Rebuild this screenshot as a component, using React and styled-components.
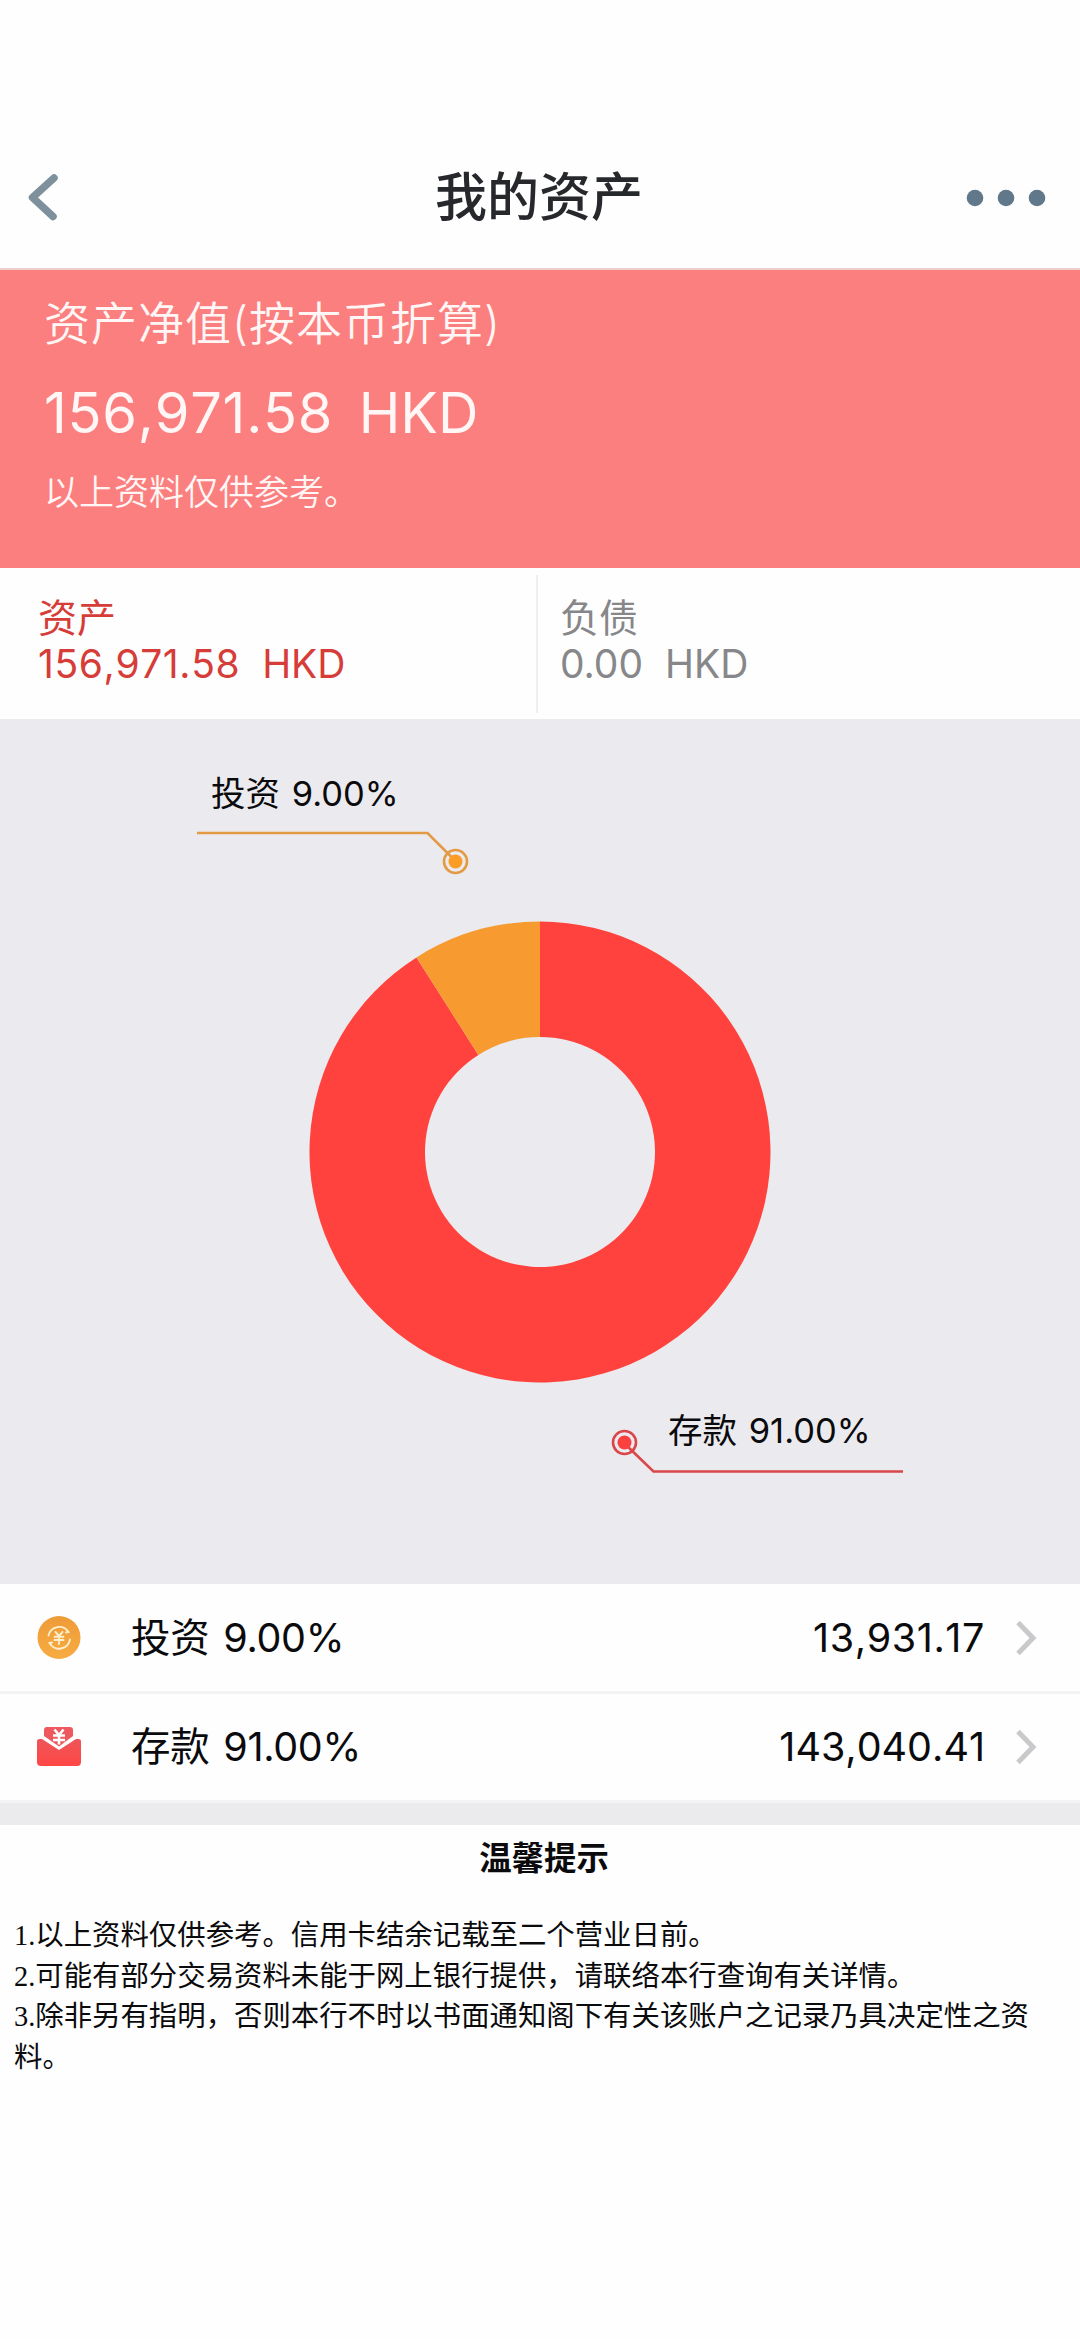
import styled, { createGlobalStyle } from "styled-components";

const GlobalStyle = createGlobalStyle`
  * {
    box-sizing: border-box;
  }
  body {
    margin: 0;
    background: #fefefe;
    color: #0b0b0d;
    font-family: Inter, "Noto Sans CJK SC", sans-serif;
  }
`;

const ORANGE = "#f79b31";
const RED = "#ff423d";

const Container = styled.div`
  display: flex;
  flex-direction: column;
  width: 1080px;
  min-height: 2339px;
`;

const Header = styled.header`
  display: grid;
  grid-template-columns: 88px 1fr 88px;
  align-items: center;
  height: 270px;
  padding: 126px 29px 0 23px;
  border-bottom: 2px solid #eccfcd;
`;

const Title = styled.h1`
  margin: 0;
  padding: 2px 0 0 4px;
  font-size: 52px;
  line-height: 60px;
  font-weight: 500;
  text-align: center;
  color: #26282c;
`;

const Amount = styled.span`
  font-kerning: none;
  letter-spacing: ${(props) => props.$spacing || "0"};
`;

const Summary = styled.section`
  display: flex;
  flex-direction: column;
  height: 298px;
  padding: 23px 44px 0;
  background: #fb7f7e;
  color: #fff6f5;
`;

const SummaryLabel = styled.span`
  font-size: 46px;
  line-height: 60px;
  font-weight: 350;
  letter-spacing: 1px;
`;

const SummaryAmount = styled.span`
  margin-top: 24px;
  font-size: 56px;
  line-height: 72px;
  font-weight: 400;
  white-space: pre;
  word-spacing: -3px;
`;

const SummaryNote = styled.span`
  margin-top: 19px;
  font-size: 35px;
  line-height: 48px;
  font-weight: 350;
`;

const Totals = styled.section`
  display: grid;
  grid-template-columns: 536px 1fr;
  height: 151px;
  padding: 7px 0 6px;
`;

const Total = styled.div`
  display: flex;
  flex-direction: column;
  padding: 20px 0 0 ${(props) => props.$left};
  border-left: ${(props) => (props.$divided ? "2px solid #f3edf1" : "none")};
  color: ${(props) => props.$color};
  font-size: 39px;
  line-height: 46px;
  white-space: pre;
`;

const ChartPanel = styled.section`
  height: 865px;
  background: #ebeaee;
`;

const ChartSvg = styled.svg`
  display: block;
`;

const ChartText = styled.text`
  font-size: 34.5px;
  word-spacing: 2px;
  fill: #0b0b0d;
`;

const List = styled.ul`
  margin: 0;
  padding: 0;
  list-style: none;
  border-bottom: 3px solid #f3f2f5;
`;

const Row = styled.li`
  display: flex;
  align-items: center;
  height: ${(props) => props.$height};
  padding: 0 41px 0 36px;
  font-size: 39.5px;
  line-height: 50px;

  & + & {
    border-top: 3px solid #f3f2f4;
  }
`;

const RowName = styled.span`
  margin-left: 49px;
  word-spacing: 3px;
  letter-spacing: -0.3px;
`;

const RowValue = styled(Amount)`
  margin-left: auto;
  margin-right: 30px;
`;

const Divider = styled.div`
  height: 22px;
  background: #ebeaed;
`;

const Tips = styled.section`
  padding: 10px 14px 0;
`;

const TipsTitle = styled.h2`
  margin: 0 0 33px;
  padding-left: 8px;
  font-size: 32.4px;
  line-height: 48px;
  font-weight: 700;
  text-align: center;
`;

const Tip = styled.p`
  margin: 0;
  font-family: "Liberation Serif", "Noto Sans CJK SC", serif;
  font-size: 28.4px;
  line-height: 40.6px;
`;

const rows = [
  {
    name: "投资 9.00%",
    value: "13,931.17",
    icon: "coin",
    height: "107px",
    spacing: "0.6px",
  },
  {
    name: "存款 91.00%",
    value: "143,040.41",
    icon: "envelope",
    height: "109px",
    spacing: "0",
  },
];

const tips = [
  "1.以上资料仅供参考。信用卡结余记载至二个营业日前。",
  "2.可能有部分交易资料未能于网上银行提供，请联络本行查询有关详情。",
  "3.除非另有指明，否则本行不时以书面通知阁下有关该账户之记录乃具决定性之资料。",
];

const BackIcon = () => (
  <svg width="40" height="48" viewBox="0 0 40 48" fill="none">
    <path
      d="M31 5 L9.5 24.5 L30 43.5"
      stroke="#7d909c"
      strokeWidth="7.5"
      strokeLinecap="round"
      strokeLinejoin="round"
    />
  </svg>
);

const MoreIcon = () => (
  <svg width="88" height="24" viewBox="0 0 88 24" fill="#61788a">
    <circle cx="12" cy="13" r="8.3" />
    <circle cx="43" cy="13" r="8.3" />
    <circle cx="74" cy="13" r="8.3" />
  </svg>
);

const CoinIcon = () => (
  <svg width="46" height="46" viewBox="0 0 46 46" fill="none">
    <defs>
      <linearGradient id="coin" x1="0" y1="0" x2="0" y2="1">
        <stop offset="0" stopColor="#ee9b38" />
        <stop offset="1" stopColor="#f7ac42" />
      </linearGradient>
    </defs>
    <circle cx="23" cy="22.5" r="21.5" fill="url(#coin)" />
    <g stroke="#ffeecb" strokeWidth="1.9" strokeLinecap="round">
      <path d="M12.5 20.5 A11 11 0 0 1 32.5 17 L30 17.5" />
      <path d="M34 24.5 A11 11 0 0 1 13.5 28 L16 27.5" />
      <path d="M19.5 17 L23 21 L26.5 17 M23 21 V29 M18.5 21.8 H27.5 M18.5 25 H27.5" />
    </g>
  </svg>
);

const EnvelopeIcon = () => (
  <svg width="46" height="46" viewBox="0 0 46 46" fill="none">
    <defs>
      <linearGradient id="envelope" x1="0" y1="0" x2="0" y2="1">
        <stop offset="0" stopColor="#ee555a" />
        <stop offset="1" stopColor="#ff4745" />
      </linearGradient>
    </defs>
    <path
      d="M8 12 V6 Q8 3 11 3 H34 Q37 3 37 6 V12 L23 22.5 Z"
      fill="#ee5960"
    />
    <path
      d="M1 17.5 Q1 15 3.500 15 H6 L23 26 L40 15 H42.500 Q45 15 45 17.500 V38 Q45 42 41 42 H5 Q1 42 1 38 Z"
      fill="url(#envelope)"
    />
    <path
      d="M18.500 5.500 L23 11 L27.500 5.500 M23 11 V20.500 M17 11.500 H29 M17 16 H29"
      stroke="#fff"
      strokeWidth="2.600"
    />
  </svg>
);

const Chevron = () => (
  <svg width="24" height="38" viewBox="0 0 24 38" fill="none">
    <path d="M3 3.5 L18 19 L3 34.5" stroke="#c9c9cc" strokeWidth="5" />
  </svg>
);

const icons = { coin: CoinIcon, envelope: EnvelopeIcon };

// point on a circle round the chart centre, angle clockwise from 12 o'clock
const point = (radius, share) => {
  const angle = share * 2 * Math.PI;
  return `${540 + radius * Math.sin(angle)} ${433 - radius * Math.cos(angle)}`;
};

const slice = (from, to) => {
  const large = to - from > 0.5 ? 1 : 0;
  return `M${point(230.5, from)} A230.5 230.5 0 ${large} 1 ${point(230.5, to)}
    L${point(115, to)} A115 115 0 ${large} 0 ${point(115, from)} Z`;
};

const Chart = () => (
  <ChartSvg width="1080" height="865" viewBox="0 0 1080 865" fill="none">
    <path d={slice(0, 0.91)} fill={RED} />
    <path d={slice(0.91, 1)} fill={ORANGE} />

    <g stroke="#e39a45" strokeWidth="2.6">
      <path d="M197 114 H427.5 L452 138.5" />
      <circle cx="455.5" cy="142.5" r="11.5" />
      <circle cx="455.5" cy="142.5" r="7" fill="#f99d26" stroke="none" />
    </g>
    <ChartText x="211" y="86.5">
      投资 9.00%
    </ChartText>

    <g stroke="#d9474b" strokeWidth="2.6">
      <path d="M626 726 L653.5 752.5 H903" />
      <circle cx="624.5" cy="723.5" r="11.5" />
      <circle cx="624.5" cy="723.5" r="7" fill="#fb4040" stroke="none" />
    </g>
    <ChartText x="668" y="723.5">
      存款 91.00%
    </ChartText>
  </ChartSvg>
);

const App = () => {
  return (
    <Container>
      <GlobalStyle />
      <Header>
        <BackIcon />
        <Title>我的资产</Title>
        <MoreIcon />
      </Header>
      <Summary>
        <SummaryLabel>资产净值(按本币折算)</SummaryLabel>
        <SummaryAmount>
          <Amount $spacing="0.75px">156,971.58</Amount>
          {"  "}HKD
        </SummaryAmount>
        <SummaryNote>以上资料仅供参考。</SummaryNote>
      </Summary>
      <Totals>
        <Total $left="38px" $color="#d63c38">
          <span>资产</span>
          <span>
            <Amount $spacing="0.6px">156,971.58</Amount>
            {"  "}HKD
          </span>
        </Total>
        <Total $left="22px" $color="#87878a" $divided>
          <span>负债</span>
          <span>0.00{"  "}HKD</span>
        </Total>
      </Totals>
      <ChartPanel>
        <Chart />
      </ChartPanel>
      <List>
        {rows.map((row) => {
          const Icon = icons[row.icon];
          return (
            <Row key={row.name} $height={row.height}>
              <Icon />
              <RowName>{row.name}</RowName>
              <RowValue $spacing={row.spacing}>{row.value}</RowValue>
              <Chevron />
            </Row>
          );
        })}
      </List>
      <Divider />
      <Tips>
        <TipsTitle>温馨提示</TipsTitle>
        {tips.map((tip) => (
          <Tip key={tip}>{tip}</Tip>
        ))}
      </Tips>
    </Container>
  );
};

export default App;
